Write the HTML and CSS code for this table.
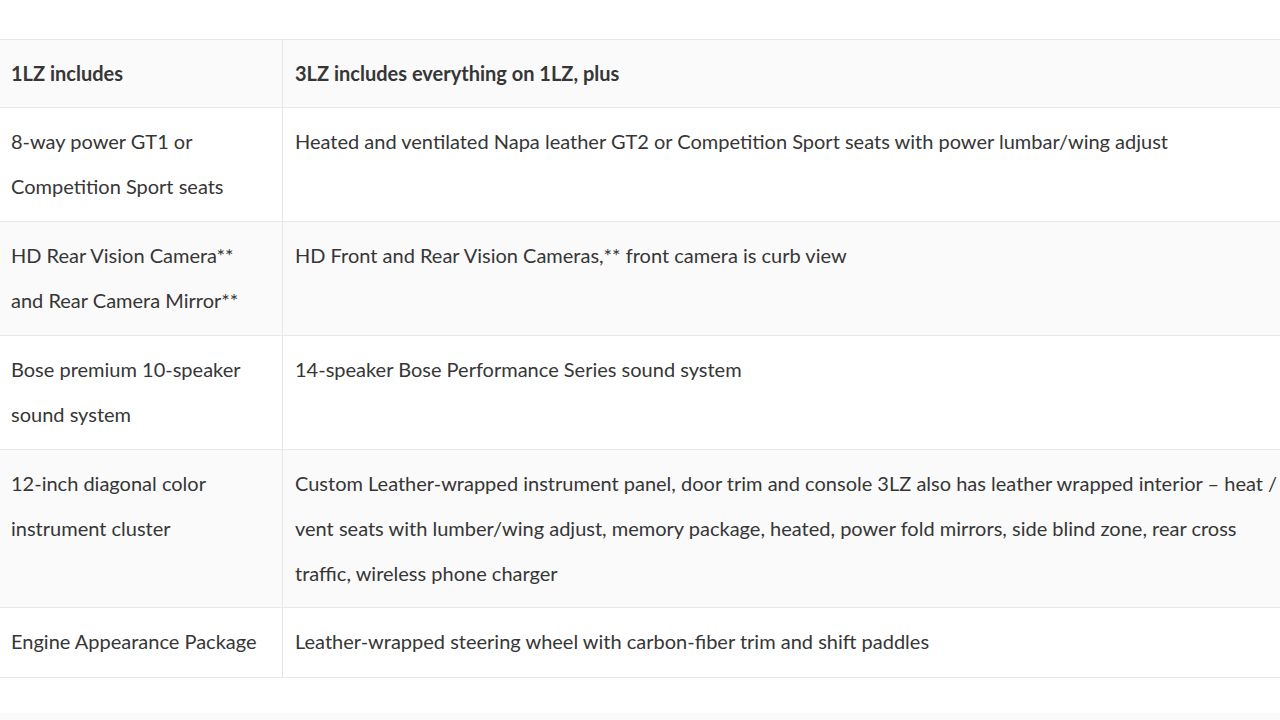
FILE: index.html
```
<!DOCTYPE html>
<html lang="en">
<head>
    <meta charset="UTF-8">
    <meta name="viewport" content="width=device-width, initial-scale=1.0">
    <title>1LZ vs 3LZ</title>
    <link rel="stylesheet" href="styles.css">
</head>
<body>
    <div class="spec-wrap">
        <table class="spec-table">
            <thead>
                <tr>
                    <th class="col-base">1LZ includes</th>
                    <th>3LZ includes everything on 1LZ, plus</th>
                </tr>
            </thead>
            <tbody>
                <tr>
                    <td class="col-base">8-way power GT1 or<br>Competition Sport seats</td>
                    <td>Heated and ventilated Napa leather GT2 or Competition Sport seats with power lumbar/wing adjust</td>
                </tr>
                <tr>
                    <td class="col-base">HD Rear Vision Camera**<br>and Rear Camera Mirror**</td>
                    <td>HD Front and Rear Vision Cameras,** front camera is curb view</td>
                </tr>
                <tr>
                    <td class="col-base">Bose premium 10-speaker<br>sound system</td>
                    <td>14-speaker Bose Performance Series sound system</td>
                </tr>
                <tr class="tall">
                    <td class="col-base">12-inch diagonal color<br>instrument cluster</td>
                    <td>Custom Leather-wrapped instrument panel, door trim and console 3LZ also has leather wrapped interior – heat /<br>vent seats with lumber/wing adjust, memory package, heated, power fold mirrors, side blind zone, rear cross<br>traffic, wireless phone charger</td>
                </tr>
                <tr>
                    <td class="col-base">Engine Appearance Package</td>
                    <td>Leather-wrapped steering wheel with carbon-fiber trim and shift paddles</td>
                </tr>
            </tbody>
        </table>
    </div>
    <div class="after"></div>
</body>
</html>
```

FILE: styles.css
```
/* --- Global Setup --- */
body, html {
    margin: 0;
    padding: 0;
    height: 100%;
    overflow: hidden;
    background-color: #fff;
    font-family: 'Lato', 'Open Sans', sans-serif;
    color: #363636;
}

/* --- Spec table --- */
.spec-wrap {
    padding-top: 39px;
}

.spec-table {
    width: 1330px;
    border-collapse: collapse;
    font-size: 20px;
    line-height: 45px;
}

.spec-table th,
.spec-table td {
    text-align: left;
    vertical-align: top;
    padding: 11px 11px 12px 12px;
    border-top: 1px solid #e8e8e8;
    border-bottom: 1px solid #e8e8e8;
    white-space: nowrap;
}

.spec-table th {
    font-weight: bold;
    padding-bottom: 11px;
}

.spec-table .col-base {
    width: 260px;
    padding-left: 11px;
    border-right: 1px solid #e6e6e6;
}

.spec-table tr.tall td { padding-bottom: 11px; }
.spec-table tbody tr:last-child td { padding-bottom: 13px; }

.spec-table thead tr,
.spec-table tbody tr:nth-child(even) { background-color: #fafafa; }

.after {
    height: 40px;
    margin-top: 35px;
    background-color: #fafafa;
}
```
